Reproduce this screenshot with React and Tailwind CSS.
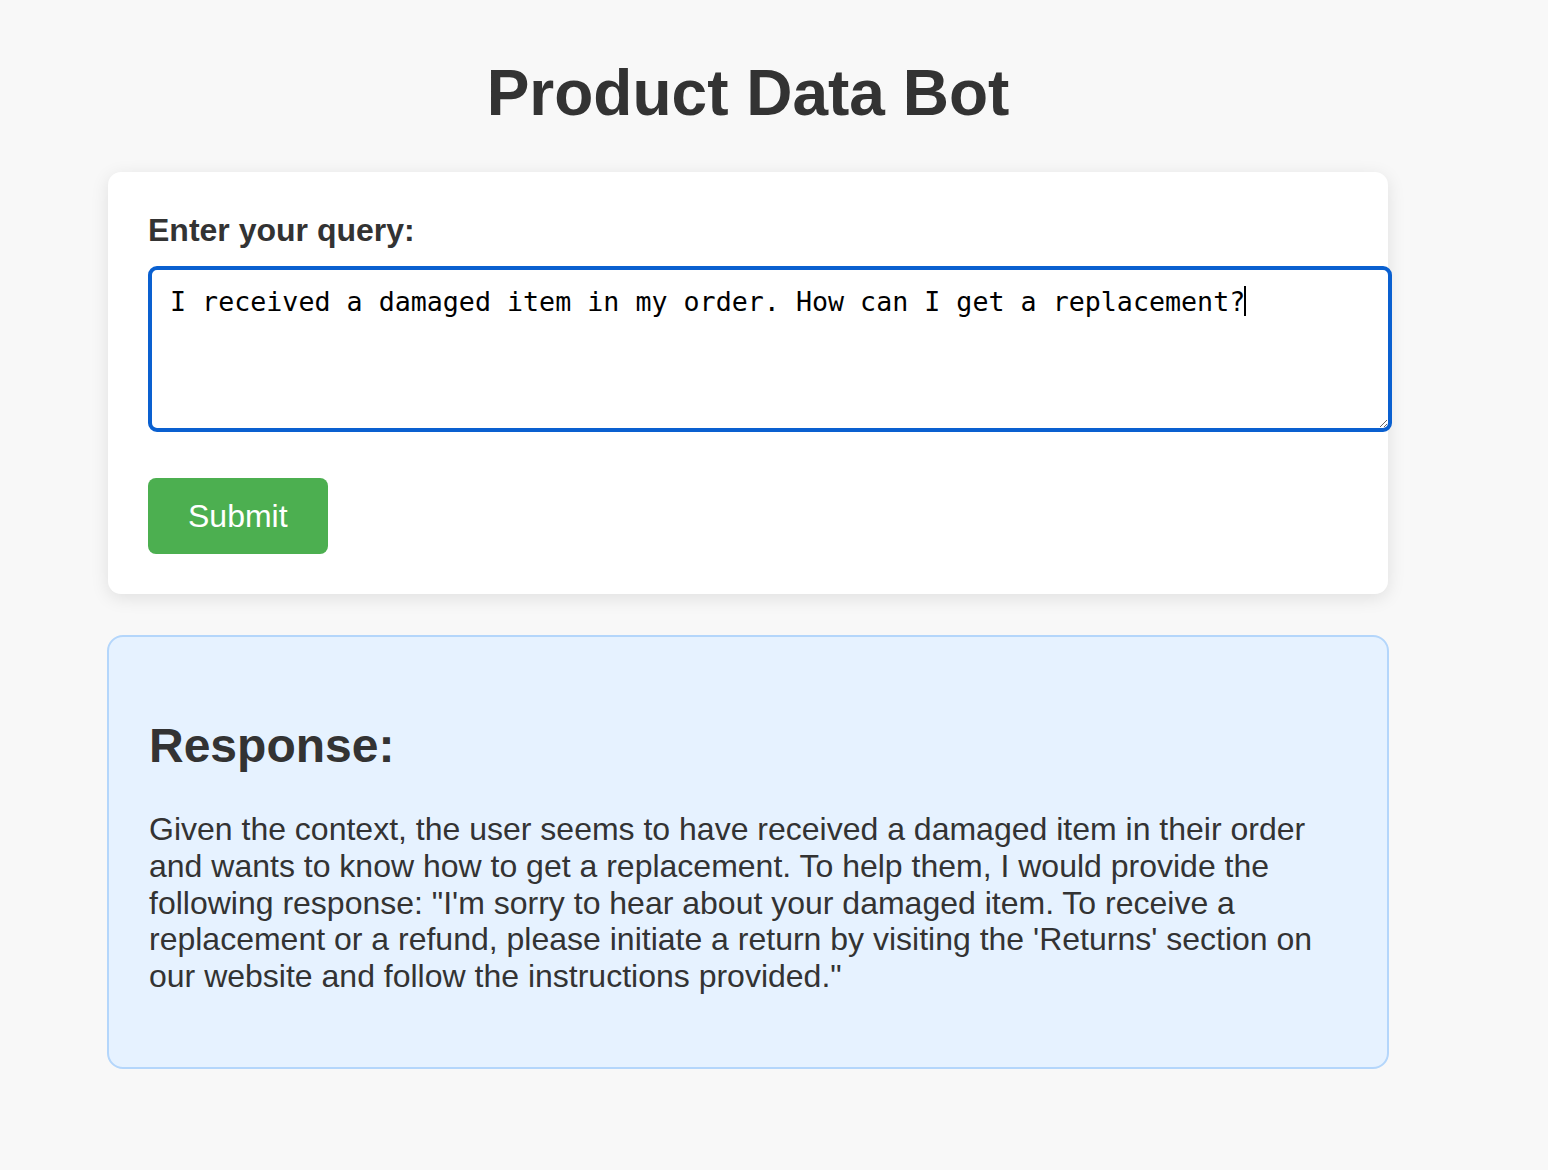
import React from 'react';

const query = 'I received a damaged item in my order. How can I get a replacement?';

const answer =
  'Given the context, the user seems to have received a damaged item in their order and wants to know how to get a replacement. To help them, I would provide the following response: "I\'m sorry to hear about your damaged item. To receive a replacement or a refund, please initiate a return by visiting the \'Returns\' section on our website and follow the instructions provided."';

const App = () => {
  return (
    <div className="min-h-[1170px] bg-[#f8f8f8] text-[#333] font-['Liberation_Sans',Arial,sans-serif] pt-[56px] pl-[108px]">
      <div className="w-[1280px]">
        <h1 className="text-center text-[64px] leading-[74px] font-bold mb-[42px]">Product Data Bot</h1>

        {/* query form */}
        <div className="bg-white rounded-[13px] shadow-[0_4px_18px_rgba(0,0,0,0.1)] p-10">
          <label className="block text-[32px] leading-[37px] font-bold mb-[17px]">Enter your query:</label>
          <div className="relative w-[1244px] mb-[46px]">
            <textarea
              readOnly
              defaultValue={query}
              className="block w-full h-[166px] bg-white border-[4px] border-[#0a60d0] rounded-[9px] px-[18px] py-[16px] text-[26.67px] leading-[32px] text-black font-['DejaVu_Sans_Mono',Menlo,monospace] outline-none resize-y"
            />
            <span className="absolute left-[1096px] top-[20px] w-[2px] h-[30px] bg-black" />
          </div>
          <button className="bg-[#4caf50] text-white text-[32px] leading-[36px] h-[76px] px-10 rounded-lg">
            Submit
          </button>
        </div>

        {/* response */}
        <div className="mt-[41px] -ml-px w-[1282px] bg-[#e6f2ff] border-2 border-[#b4d6fb] rounded-2xl px-10 pt-[81px] pb-[72px]">
          <h2 className="text-[48px] leading-[55px] font-bold mb-[38px]">Response:</h2>
          <p className="text-[32px] leading-[36.8px]">{answer}</p>
        </div>
      </div>
    </div>
  );
};

export default App;
